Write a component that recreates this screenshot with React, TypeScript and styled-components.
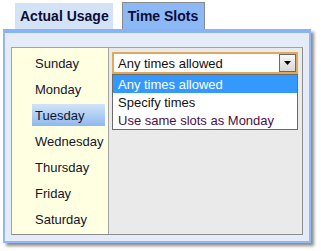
import React from "react";
import styled, { createGlobalStyle } from "styled-components";

const Global = createGlobalStyle`
  html, body { margin: 0; padding: 0; background: #ffffff; }
  body { font-family: "Liberation Sans", Arial, sans-serif; }
`;

const Page = styled.div`
  width: 321px;
  height: 251px;
  padding: 2px 0 0 3px;
  box-sizing: border-box;
`;

const TabRow = styled.div`
  display: flex;
  align-items: flex-end;
  gap: 9px;
  padding-left: 12px;
  height: 27px;
`;

const Tab = styled.div<{ $active?: boolean }>`
  box-sizing: border-box;
  height: ${(p) => (p.$active ? "27px" : "26px")};
  padding: ${(p) => (p.$active ? "0 6px 0 5px" : "0 4px 0 5px")};
  display: flex;
  align-items: center;
  font-size: 14px;
  font-weight: bold;
  color: #0c0c38;
  background: ${(p) => (p.$active ? "#8cb8f5" : "#d3e3f5")};
  border: ${(p) => (p.$active ? "1px solid #8a8a8a" : "none")};
  border-bottom: none;
`;

const Frame = styled.div`
  width: 308px;
  box-sizing: border-box;
  background: #e6ecf7;
  border-style: solid;
  border-color: #90b9f3;
  border-width: 4px 2px 2px 2px;
  border-top-color: #88b3f5;
  padding: 14px 6px 6px 6px;
  box-shadow: 3px 3px 3px rgba(0, 0, 0, 0.45);
`;

const Panel = styled.div`
  display: flex;
  height: 188px;
  box-sizing: border-box;
  border: 1px solid #a3a3a3;
  border-right-color: #8c8c8c;
  border-bottom-color: #8c8c8c;
`;

const DayColumn = styled.div`
  width: 97px;
  box-sizing: border-box;
  background: #ffffe1;
  border-right: 1px solid #a3a3a3;
  padding: 4px 3px 0 20px;
  display: flex;
  flex-direction: column;
  gap: 4px;
`;

const Day = styled.div<{ $selected?: boolean }>`
  height: 22px;
  display: flex;
  align-items: center;
  padding-left: 3px;
  font-size: 13px;
  color: #14142e;
  background: ${(p) =>
    p.$selected ? "linear-gradient(#d2e3f7, #8db9ef)" : "transparent"};
`;

const Detail = styled.div`
  flex: 1;
  background: #eaeaea;
  padding: 4px 0 0 3px;
`;

const SelectWrap = styled.div`
  position: relative;
  width: 186px;
`;

const SelectBox = styled.div`
  box-sizing: border-box;
  height: 22px;
  border: 2px solid #e0aa5e;
  background: #fff;
  display: flex;
  align-items: center;
`;

const SelectText = styled.div`
  flex: 1;
  padding-left: 4px;
  font-size: 13px;
  color: #111;
`;

const ArrowButton = styled.div`
  width: 15px;
  height: 16px;
  margin-right: 0px;
  border: 1px solid #6a6a6a;
  background: linear-gradient(#f6f6f6, #d8d8d8);
  display: flex;
  align-items: center;
  justify-content: center;
`;

const List = styled.div`
  position: absolute;
  top: 100%;
  left: 0;
  width: 186px;
  box-sizing: border-box;
  border: 1px solid #6b6b6b;
  background: #fff;
  display: flex;
  flex-direction: column;
`;

const Option = styled.div<{ $active?: boolean; $color?: string }>`
  height: 18px;
  display: flex;
  align-items: center;
  padding-left: 5px;
  font-size: 13px;
  background: ${(p) => (p.$active ? "#3399ff" : "#fff")};
  color: ${(p) => (p.$active ? "#fff" : p.$color || "#111")};
`;

const days = ["Sunday", "Monday", "Tuesday", "Wednesday", "Thursday", "Friday", "Saturday"];

export default function App() {
  return (
    <Page>
      <Global />
      <TabRow>
        <Tab>Actual Usage</Tab>
        <Tab $active>Time Slots</Tab>
      </TabRow>
      <Frame>
        <Panel>
          <DayColumn>
            {days.map((d) => (
              <Day key={d} $selected={d === "Tuesday"}>
                {d}
              </Day>
            ))}
          </DayColumn>
          <Detail>
            <SelectWrap>
              <SelectBox>
                <SelectText>Any times allowed</SelectText>
                <ArrowButton>
                  <svg width="7" height="4" viewBox="0 0 7 4">
                    <path d="M0 0 H7 L3.5 4 Z" fill="#000" />
                  </svg>
                </ArrowButton>
              </SelectBox>
              <List>
                <Option $active>Any times allowed</Option>
                <Option>Specify times</Option>
                <Option $color="#4a1048">Use same slots as Monday</Option>
              </List>
            </SelectWrap>
          </Detail>
        </Panel>
      </Frame>
    </Page>
  );
}
